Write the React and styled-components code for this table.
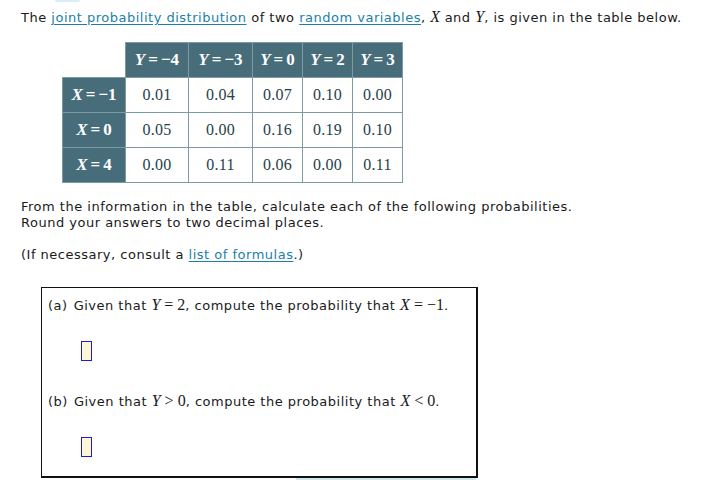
import React from 'react'
import styled, { createGlobalStyle } from 'styled-components'

const GlobalStyle = createGlobalStyle`
    html, body {
        margin: 0;
        padding: 0;
        background: #ffffff;
    }
    body {
        font-family: "DejaVu Sans", Verdana, sans-serif;
        font-size: 13px;
        letter-spacing: 0.5px;
        color: #1a1a1a;
    }
`

const Page = styled.div`
    position: relative;
    width: 728px;
    height: 480px;
    overflow: hidden;
    padding: 9px 0 0 21px;
    box-sizing: border-box;
`

const Para = styled.p`
    margin: 0;
    line-height: 16px;
    margin-top: ${p => p.$top || '0'};
`

const Link = styled.a`
    color: #1a7fa8;
    text-decoration: underline;
    text-underline-offset: 2px;
    cursor: pointer;
`

const M = styled.span`
    font-family: "Liberation Serif", "Times New Roman", serif;
    font-size: ${p => p.$size || 16}px;
    font-style: ${p => p.$up ? 'normal' : 'italic'};
    letter-spacing: 0;
`

const Op = styled.span`
    font-family: "Liberation Serif", "Times New Roman", serif;
    font-style: normal;
    letter-spacing: 0;
    margin: 0 ${p => p.$gap || 4}px;
`

const Table = styled.table`
    border-collapse: collapse;
    margin: 16px 0 0 41px;
    font-family: "Liberation Serif", "Times New Roman", serif;
    font-size: 16px;
    letter-spacing: 0.3px;
    color: #263f48;
`

const Head = styled.th`
    background: #476d7b;
    color: #ffffff;
    font-weight: bold;
    font-size: 17px;
    height: 34px;
    padding: 0;
    width: ${p => p.$w}px;
    border: 1px solid #7d9ca2;
    text-align: center;
    white-space: nowrap;
    letter-spacing: 0;
`

const Blank = styled.th`
    border: none;
    background: transparent;
`

const Cell = styled.td`
    height: 34px;
    padding: 0;
    text-align: center;
    border: 1px solid #7d9ca2;
`

const Box = styled.div`
    margin: 24px 0 0 20px;
    width: 437px;
    height: 191px;
    border: 1px solid #111;
    border-right-width: 2px;
    border-bottom-width: 2px;
    box-sizing: border-box;
    padding: 8px 0 0 6px;
`

const Question = styled.div`
    line-height: 17px;
    display: flex;
    align-items: baseline;
    gap: 6px;
`

const AnswerRow = styled.div`
    box-sizing: border-box;
    padding: 27px 0 0 33px;
    height: 78px;
`

const AnswerBox = styled.span`
    display: block;
    width: 11px;
    height: 20px;
    box-sizing: border-box;
    border: 1px solid #1a1ae0;
    background: #fdf7d6;
`

const TopGlint = styled.div`
    position: absolute;
    left: 55px;
    top: 0;
    width: 25px;
    height: 2px;
    background: #d6eef6;
    border-radius: 0 0 6px 6px;
`

const BottomGlint = styled.div`
    position: absolute;
    left: 296px;
    top: 478px;
    width: 180px;
    height: 2px;
    background: #cfe6ee;
`

const rel = (v, op, n) => (
    <>
        <M>{v}</M><M $up><Op>{op}</Op>{n}</M>
    </>
)

const cols = [
    { y: '\u22124', w: 62 },
    { y: '\u22123', w: 63 },
    { y: '0', w: 49 },
    { y: '2', w: 49 },
    { y: '3', w: 49 },
]

const rows = [
    { x: '\u22121', v: ['0.01', '0.04', '0.07', '0.10', '0.00'] },
    { x: '0', v: ['0.05', '0.00', '0.16', '0.19', '0.10'] },
    { x: '4', v: ['0.00', '0.11', '0.06', '0.00', '0.11'] },
]

export default function App() {
    return (
        <Page>
            <GlobalStyle />
            <TopGlint />
            <Para>
                The <Link>joint probability distribution</Link> of two <Link>random variables</Link>, <M>X</M> and <M>Y</M>, is given in the table below.
            </Para>
            <Table>
                <thead>
                    <tr>
                        <Blank />
                        {cols.map(c => (
                            <Head key={c.y} $w={c.w}>
                                <M $size={17}>Y</M><Op $gap={3}>=</Op>{c.y}
                            </Head>
                        ))}
                    </tr>
                </thead>
                <tbody>
                    {rows.map(r => (
                        <tr key={r.x}>
                            <Head $w={62}>
                                <M $size={17}>X</M><Op $gap={3}>=</Op>{r.x}
                            </Head>
                            {r.v.map((v, i) => <Cell key={i}>{v}</Cell>)}
                        </tr>
                    ))}
                </tbody>
            </Table>
            <Para $top="16px">From the information in the table, calculate each of the following probabilities.</Para>
            <Para>Round your answers to two decimal places.</Para>
            <Para $top="16px">(If necessary, consult a <Link>list of formulas</Link>.)</Para>
            <Box>
                <Question>
                    <span>(a)</span>
                    <span>Given that {rel('Y', '=', '2')}, compute the probability that {rel('X', '=', '\u22121')}.</span>
                </Question>
                <AnswerRow><AnswerBox /></AnswerRow>
                <Question>
                    <span>(b)</span>
                    <span>Given that {rel('Y', '>', '0')}, compute the probability that {rel('X', '<', '0')}.</span>
                </Question>
                <AnswerRow><AnswerBox /></AnswerRow>
            </Box>
            <BottomGlint />
        </Page>
    )
}
